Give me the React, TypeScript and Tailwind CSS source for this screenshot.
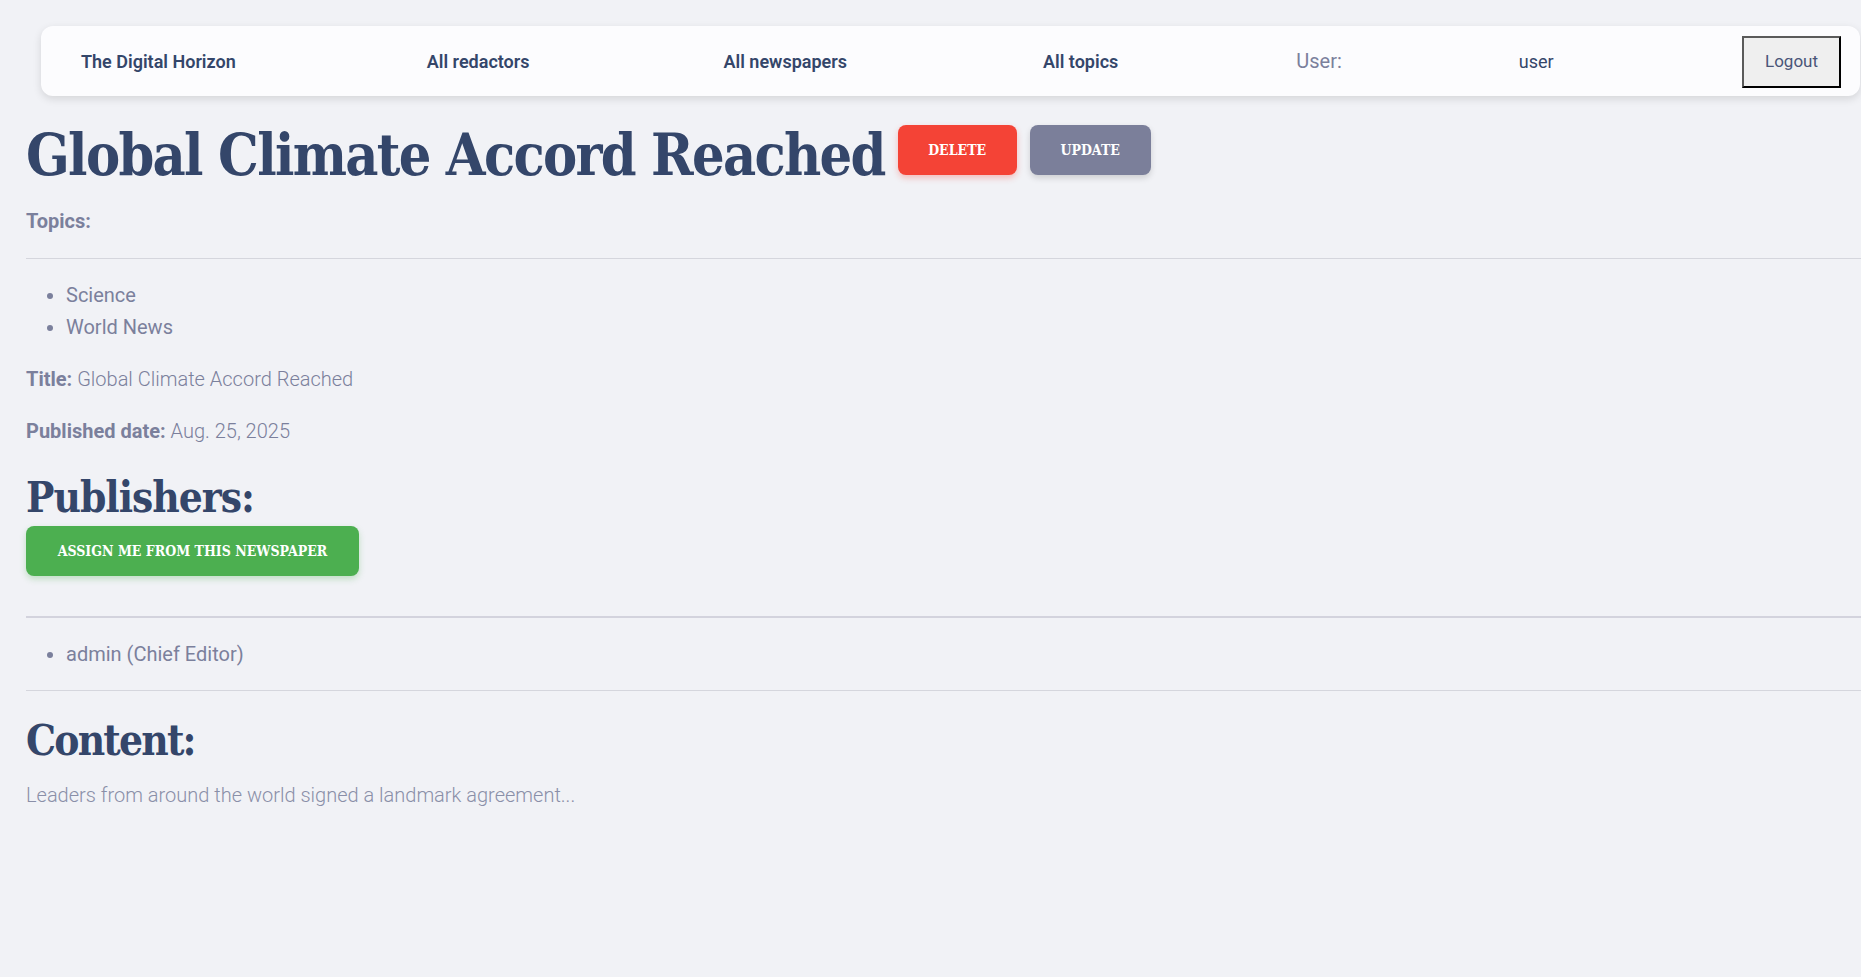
const slab = "font-['DejaVu_Serif_Condensed','DejaVu_Serif',serif]"

function NavBar() {
  return (
    <nav className="ml-[41px] mr-[1px] flex h-[70px] items-center rounded-xl bg-[#fcfcfe] pl-[40px] pr-[19px] shadow-[0_3px_8px_rgba(0,0,0,0.12)] font-['Roboto',sans-serif]">
      <a className="text-[18px] font-semibold text-[#34466a]">The Digital Horizon</a>
      <a className="ml-[191px] text-[18px] font-semibold text-[#34466a]">All redactors</a>
      <a className="ml-[194px] text-[18px] font-semibold text-[#34466a]">All newspapers</a>
      <a className="ml-[196px] text-[18px] font-semibold text-[#34466a]">All topics</a>
      <span className="ml-[178px] text-[20px] text-[#7b809c]">User:</span>
      <span className="ml-[177px] text-[18px] text-[#34466a]">user</span>
      <button className="ml-auto mt-[1px] h-[52px] w-[99px] border-2 border-t-[#5a5a5a] border-l-[#5a5a5a] border-r-black border-b-black bg-[#efefef] text-[17px] text-[#4a5578]">
        Logout
      </button>
    </nav>
  )
}

export default function App() {
  return (
    <div className="min-h-screen bg-[#f1f2f6] pt-[26px] pb-10 font-['Roboto',sans-serif]">
      <NavBar />
      <main className="pl-[26px]">
        <div className="mt-[29px] flex h-[50px] items-center">
          <h1 className={`${slab} pt-[9px] text-[57px] font-bold leading-[50px] tracking-[-1.7px] text-[#34466a]`}>
            Global Climate Accord Reached
          </h1>
          <button className={`${slab} ml-[13px] h-[50px] w-[119px] rounded-lg bg-[#f44336] text-[14px] font-bold text-white shadow-[0_3px_6px_rgba(244,67,54,0.3)]`}>
            DELETE
          </button>
          <button className={`${slab} ml-[13px] h-[50px] w-[121px] rounded-lg bg-[#7b7f9a] text-[14px] font-bold text-white shadow-[0_3px_6px_rgba(0,0,0,0.15)]`}>
            UPDATE
          </button>
        </div>

        <p className="mt-[30px] text-[20px] font-bold leading-[32px] text-[#7b809c]">Topics:</p>
        <hr className="mt-[21px] border-t border-[#d5d6dd]" />
        <ul className="mt-[20px] list-disc pl-[40px] text-[20px] leading-[32px] text-[#7b809c]">
          <li>Science</li>
          <li>World News</li>
        </ul>

        <p className="mt-[20px] text-[20px] leading-[32px] text-[#7b809c]">
          <span className="font-bold">Title:</span> <span className="font-light">Global Climate Accord Reached</span>
        </p>
        <p className="mt-[20px] text-[20px] leading-[32px] text-[#7b809c]">
          <span className="font-bold">Published date:</span> <span className="font-light">Aug. 25, 2025</span>
        </p>

        <h2 className={`${slab} mt-[26px] text-[42px] font-bold leading-[50px] tracking-[-1px] text-[#34466a]`}>Publishers:</h2>
        <button className={`${slab} mt-[3px] h-[50px] w-[333px] rounded-lg bg-[#4caf50] text-[14px] font-bold text-white shadow-[0_3px_6px_rgba(76,175,80,0.3)]`}>
          ASSIGN ME FROM THIS NEWSPAPER
        </button>
        <hr className="mt-[40px] border-t-2 border-[#d3d3dd]" />
        <ul className="mt-[20px] list-disc pl-[40px] text-[20px] leading-[32px] text-[#7b809c]">
          <li>admin (Chief Editor)</li>
        </ul>
        <hr className="mt-[20px] border-t border-[#d5d6dd]" />

        <h2 className={`${slab} mt-[25px] text-[42px] font-bold leading-[50px] tracking-[-1.8px] text-[#34466a]`}>Content:</h2>
        <p className="mt-[13px] text-[20px] font-light leading-[32px] text-[#8a8fa8]">
          Leaders from around the world signed a landmark agreement...
        </p>
      </main>
    </div>
  )
}
